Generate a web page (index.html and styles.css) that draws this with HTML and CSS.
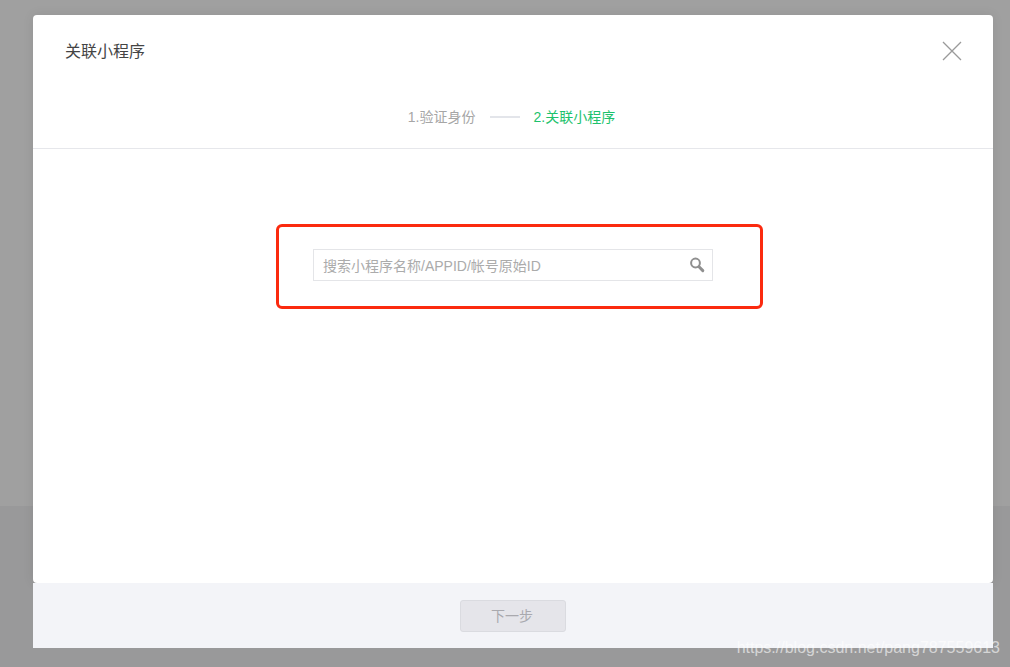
FILE: index.html
```html
<!DOCTYPE html>
<html lang="en">
<head>
  <meta charset="UTF-8">
  <meta name="viewport" content="width=device-width, initial-scale=1.0">
  <title>关联小程序</title>
  <link rel="stylesheet" href="styles.css">
</head>
<body>
  <div class="backdrop">
    <div class="dialog">
      <div class="dialog-main">
        <!-- Header -->
        <div class="dialog-head">
          <h3 class="dialog-title">关联小程序</h3>
          <svg class="close-icon" width="20" height="20" viewBox="0 0 20 20">
            <path d="M1 1L19 19M19 1L1 19" stroke="#9a9a9a" stroke-width="1.3" fill="none"/>
          </svg>
        </div>

        <!-- Steps -->
        <div class="steps">
          <span class="step">1.验证身份</span>
          <span class="step-line"></span>
          <span class="step step-active">2.关联小程序</span>
        </div>

        <!-- Search -->
        <div class="dialog-body">
          <div class="highlight">
            <div class="search">
              <span class="search-text">搜索小程序名称/APPID/帐号原始ID</span>
              <svg class="search-icon" width="16" height="16" viewBox="0 0 16 16">
                <circle cx="6.5" cy="6" r="4.4" stroke="#8f8f8f" stroke-width="2" fill="none"/>
                <path d="M10 9.8L13.8 13.6" stroke="#8f8f8f" stroke-width="3" stroke-linecap="round" fill="none"/>
              </svg>
            </div>
          </div>
        </div>
      </div>

      <!-- Footer -->
      <div class="dialog-foot">
        <button class="next-button" disabled>下一步</button>
      </div>
    </div>
  </div>

  <div class="watermark">https://blog.csdn.net/pang787559613</div>
</body>
</html>
```

FILE: styles.css
```css
html,
body {
  margin: 0;
  padding: 0;
}

body {
  position: relative;
  width: 1010px;
  height: 667px;
  overflow: hidden;
  font-family: "Liberation Sans", "Noto Sans CJK SC", sans-serif;
}

.backdrop {
  height: 667px;
  padding: 15px 17px 0 33px;
  box-sizing: border-box;
  background: linear-gradient(#a0a0a0 506px, #99999a 506px);
}

.dialog {
  width: 960px;
  height: 633px;
  display: flex;
  flex-direction: column;
}

.dialog-main {
  flex: 1;
  display: flex;
  flex-direction: column;
  background-color: #fff;
  border-radius: 4px;
  box-shadow: 0 0 12px rgba(0, 0, 0, 0.08);
}

.dialog-head {
  height: 72px;
  padding: 0 31px 0 32px;
  display: flex;
  justify-content: space-between;
  align-items: center;
}

.dialog-title {
  margin: 0 0 2px;
  font-size: 16px;
  font-weight: normal;
  color: #444;
}

.steps {
  height: 61px;
  padding-right: 3px;
  display: flex;
  justify-content: center;
  align-items: flex-start;
  gap: 14px;
  border-bottom: 1px solid #e6e7eb;
}

.step {
  margin-top: 20px;
  font-size: 14px;
  line-height: 20px;
  color: #a6a6a6;
}

.step-active {
  color: #1dc26c;
}

.step-line {
  width: 30px;
  height: 2px;
  margin-top: 29px;
  background-color: #e3e5ea;
}

.dialog-body {
  flex: 1;
  padding: 75px 0 0 13px;
  display: flex;
  justify-content: center;
}

.highlight {
  width: 487px;
  height: 85px;
  padding: 22px 47px 0 34px;
  box-sizing: border-box;
  border: 3px solid #fb2a0f;
  border-radius: 6px;
}

.search {
  height: 32px;
  padding: 0 7px 0 9px;
  box-sizing: border-box;
  display: flex;
  justify-content: space-between;
  align-items: center;
  border: 1px solid #e4e5e8;
}

.search-text {
  font-size: 14px;
  color: #ababab;
}

.dialog-foot {
  flex: none;
  height: 65px;
  display: flex;
  justify-content: center;
  align-items: center;
  background-color: #f3f4f8;
}

.next-button {
  width: 106px;
  height: 32px;
  padding: 0 2px 2px 0;
  font-family: inherit;
  font-size: 14px;
  color: #a9a9ae;
  background-color: #e5e5ea;
  border: 1px solid #dadbe0;
  border-radius: 3px;
}

.watermark {
  position: absolute;
  right: 10px;
  bottom: 9px;
  font-size: 16px;
  line-height: 20px;
  color: rgba(255, 255, 255, 0.6);
}
```
